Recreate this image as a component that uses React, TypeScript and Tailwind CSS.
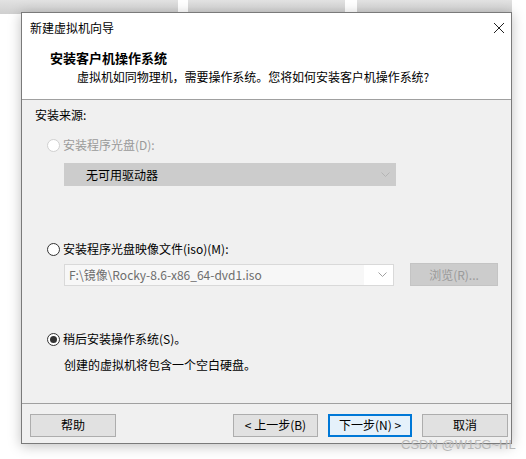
import React from "react";

const font = { fontFamily: '"Microsoft YaHei", "Noto Sans CJK SC", "Noto Sans", sans-serif' };

function Chevron({ color = "#a0a0a0" }: { color?: string }) {
  return (
    <svg width="9" height="5" viewBox="0 0 9 5" className="shrink-0">
      <path d="M0.5 0.5 L4.5 4.5 L8.5 0.5" fill="none" stroke={color} strokeWidth="1" />
    </svg>
  );
}

function Radio({ checked, disabled }: { checked?: boolean; disabled?: boolean }) {
  return (
    <span
      className={
        "w-[13px] h-[13px] rounded-full border flex items-center justify-center shrink-0 bg-white " +
        (disabled ? "border-[#d0d0d0]" : "border-[#333333]")
      }
    >
      {checked && <span className="w-[7px] h-[7px] rounded-full bg-[#333333]" />}
    </span>
  );
}

export default function App() {
  return (
    <div className="w-[526px] h-[459px] bg-white relative overflow-hidden text-[12px] text-[#000]" style={font}>
      <div className="flex h-[14px]">
        <div className="w-[178px] bg-gradient-to-b from-[#e2e2e2] to-[#cfcfcf]" />
        <div className="w-[10px]" />
        <div className="w-[157px] bg-gradient-to-b from-[#e2e2e2] to-[#cfcfcf]" />
        <div className="w-[12px]" />
        <div className="w-[155px] bg-gradient-to-b from-[#e2e2e2] to-[#cfcfcf]" />
      </div>
      <div className="absolute left-[21px] top-[12px] w-[491px] h-[432px] border border-[#7a7a7a] bg-[#f0f0f0] shadow-[0_2px_12px_rgba(0,0,0,0.25)] flex flex-col">
        {/* title bar */}
        <div className="h-[30px] bg-white flex items-center justify-between pl-[8px] pr-[4px]">
          <span className="leading-none">新建虚拟机向导</span>
          <svg width="12" height="12" viewBox="0 0 12 12" className="mr-[2px]">
            <path d="M1 1 L11 11 M11 1 L1 11" stroke="#222" strokeWidth="1" />
          </svg>
        </div>
        {/* header */}
        <div className="h-[57px] bg-white border-b border-[#a0a0a0] pl-[28px] pt-[6px] flex flex-col">
          <span className="font-bold text-[13px] leading-[18px]">安装客户机操作系统</span>
          <span className="pl-[27px] leading-[18px] mt-[1px] tracking-[-0.05px]">虚拟机如同物理机，需要操作系统。您将如何安装客户机操作系统?</span>
        </div>
        {/* body */}
        <div className="flex-1 flex flex-col pl-[13px] pt-[7px]">
          <span className="leading-[16px]">安装来源:</span>
          <div className="flex items-center gap-[3px] mt-[14px] pl-[12px] text-[#9a9a9a]">
            <Radio disabled />
            <span className="leading-[16px]">安装程序光盘(D):</span>
          </div>
          <div className="ml-[29px] mt-[10px] w-[332px] h-[23px] bg-[#cccccc] flex items-center justify-between pl-[22px] pr-[6px]">
            <span>无可用驱动器</span>
            <Chevron color="#b4b4b4" />
          </div>
          <div className="flex items-center gap-[3px] mt-[55px] pl-[12px]">
            <Radio />
            <span className="leading-[16px]">安装程序光盘映像文件(iso)(M):</span>
          </div>
          <div className="flex items-center mt-[6px] ml-[29px]">
            <div className="w-[330px] h-[22px] border border-[#d9d9d9] bg-white flex items-center justify-between pr-[6px]">
              <span className="h-full flex-1 flex items-center bg-[#f7f7f7] pl-[4px] text-[#6d6d6d] mr-[14px]">F:\镜像\Rocky-8.6-x86_64-dvd1.iso</span>
              <Chevron color="#a0a0a0" />
            </div>
            <div className="ml-[16px] w-[88px] h-[23px] bg-[#cccccc] border border-[#c4c4c4] flex items-center justify-center text-[#9a9a9a]">
              浏览(R)...
            </div>
          </div>
          <div className="flex items-center gap-[3px] mt-[45px] pl-[12px]">
            <Radio checked />
            <span className="leading-[16px]">稍后安装操作系统(S)。</span>
          </div>
          <span className="ml-[29px] mt-[10px] leading-[16px]">创建的虚拟机将包含一个空白硬盘。</span>
        </div>
        {/* footer */}
        <div className="h-[40px] border-t border-[#a0a0a0] flex items-center pl-[8px] pr-[3px] pt-[3px]">
          <div className="w-[86px] h-[23px] bg-[#e1e1e1] border border-[#adadad] flex items-center justify-center">帮助</div>
          <div className="flex-1" />
          <div className="w-[85px] h-[23px] bg-[#e1e1e1] border border-[#adadad] flex items-center justify-center">&lt; 上一步(B)</div>
          <div className="ml-[10px] w-[84px] h-[23px] bg-[#e5f1fb] border-2 border-[#0078d7] flex items-center justify-center">下一步(N) &gt;</div>
          <div className="ml-[10px] w-[86px] h-[23px] bg-[#e1e1e1] border border-[#adadad] flex items-center justify-center">取消</div>
        </div>
      </div>
      <span
        className="absolute left-[401px] top-[437px] text-[13px] text-[#b8b8b8] leading-[16px]"
        style={{ fontFamily: '"Liberation Sans", Arial, sans-serif' }}
      >
        CSDN @W15G~HL
      </span>
    </div>
  );
}
